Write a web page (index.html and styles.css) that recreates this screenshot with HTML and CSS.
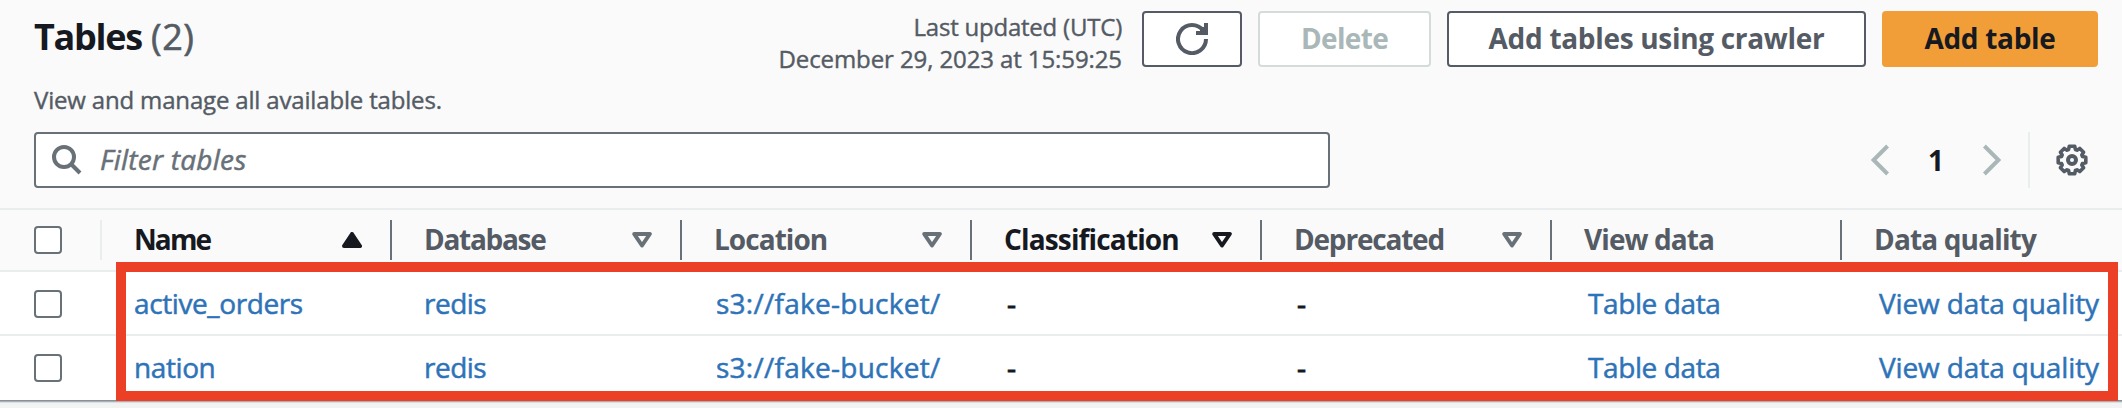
FILE: index.html
```html
<!DOCTYPE html>
<html lang="en">
<head>
<meta charset="utf-8">
<title>Tables</title>
<link rel="stylesheet" href="styles.css">
</head>
<body>
<main class="panel">
  <header class="header">
    <div class="heading">
      <h1 class="title"><span class="title-text">Tables</span> <span class="count">(2)</span></h1>
      <p class="description">View and manage all available tables.</p>
    </div>
    <div class="actions">
      <div class="updated"><div class="updated-label">Last updated (UTC)</div><div class="updated-time">December 29, 2023 at 15:59:25</div></div>
      <button class="btn btn-refresh" aria-label="Refresh">
        <svg width="32" height="32" viewBox="0 0 32 32" fill="none" stroke="currentColor" stroke-width="4"><path d="M30 16A14 14 0 1 1 27.3 7.8"/><path d="M30 0V10H20"/><path d="M24 8L28 4V8Z" fill="currentColor" stroke-width="1"/></svg>
      </button>
      <button class="btn btn-delete" disabled><span>Delete</span></button>
      <button class="btn btn-crawler"><span>Add tables using crawler</span></button>
      <button class="btn btn-primary"><span>Add table</span></button>
    </div>
  </header>
  <div class="tools">
    <div class="filter">
      <svg width="30" height="30" viewBox="0 0 30 30" fill="none" stroke="currentColor" stroke-width="4"><circle cx="12" cy="12" r="10"/><path d="M19 19L28 28"/></svg>
      <span class="placeholder">Filter tables</span>
    </div>
    <div class="pager">
      <svg class="chevron" width="18" height="32" viewBox="0 0 18 32" fill="none" stroke="currentColor" stroke-width="4"><path d="M16.6 2L2.6 16L16.6 30"/></svg>
      <span class="page">1</span>
      <svg class="chevron" width="18" height="32" viewBox="0 0 18 32" fill="none" stroke="currentColor" stroke-width="4"><path d="M1.4 2L15.4 16L1.4 30"/></svg>
      <span class="settings"><svg width="32" height="32" viewBox="0 0 32 32" fill="none" stroke="currentColor" stroke-width="4"><path stroke-width="3.6" stroke-linejoin="round" d="M13.3 2.2H18.7L19.4 5.5L21 6.2L23.8 4.4L27.6 8.2L25.8 11L26.5 12.6L29.8 13.3V18.7L26.5 19.4L25.8 21L27.6 23.8L23.8 27.6L21 25.8L19.4 26.5L18.7 29.8H13.3L12.6 26.5L11 25.8L8.2 27.6L4.4 23.8L6.2 21L5.5 19.4L2.2 18.7V13.3L5.5 12.6L6.2 11L4.4 8.2L8.2 4.4L11 6.2L12.6 5.5Z"/><circle cx="16" cy="16" r="4"/></svg></span>
    </div>
  </div>
  <div class="table">
    <div class="row head">
      <div class="select"><span class="checkbox"></span></div>
      <div class="th strong"><span class="t-name">Name</span><svg width="20" height="16" viewBox="0 0 20 16"><path d="M10 2L18 14H2Z" fill="currentColor" stroke="currentColor" stroke-width="4" stroke-linejoin="round"/></svg></div>
      <div class="th"><span class="t-database">Database</span><svg width="20" height="16" viewBox="0 0 20 16"><path d="M10 13.5L17.8 2H2.2Z" fill="none" stroke="currentColor" stroke-width="4" stroke-linejoin="round"/></svg></div>
      <div class="th"><span class="t-location">Location</span><svg width="20" height="16" viewBox="0 0 20 16"><path d="M10 13.5L17.8 2H2.2Z" fill="none" stroke="currentColor" stroke-width="4" stroke-linejoin="round"/></svg></div>
      <div class="th strong"><span class="t-class">Classification</span><svg width="20" height="16" viewBox="0 0 20 16"><path d="M10 13.5L17.8 2H2.2Z" fill="none" stroke="currentColor" stroke-width="4" stroke-linejoin="round"/></svg></div>
      <div class="th"><span class="t-deprecated">Deprecated</span><svg width="20" height="16" viewBox="0 0 20 16"><path d="M10 13.5L17.8 2H2.2Z" fill="none" stroke="currentColor" stroke-width="4" stroke-linejoin="round"/></svg></div>
      <div class="th"><span class="t-view">View data</span></div>
      <div class="th last"><span class="t-quality">Data quality</span></div>
    </div>
    <div class="row">
      <div class="select"><span class="checkbox"></span></div>
      <div class="td"><a class="c-name">active_orders</a></div>
      <div class="td"><a class="c-db">redis</a></div>
      <div class="td bucket"><a class="c-loc">s3://fake-bucket/</a></div>
      <div class="td dash">-</div>
      <div class="td dash">-</div>
      <div class="td inset"><a class="c-view">Table data</a></div>
      <div class="td quality"><a class="c-quality">View data quality</a></div>
    </div>
    <div class="row">
      <div class="select"><span class="checkbox"></span></div>
      <div class="td"><a class="c-name">nation</a></div>
      <div class="td"><a class="c-db">redis</a></div>
      <div class="td bucket"><a class="c-loc">s3://fake-bucket/</a></div>
      <div class="td dash">-</div>
      <div class="td dash">-</div>
      <div class="td inset"><a class="c-view">Table data</a></div>
      <div class="td quality"><a class="c-quality">View data quality</a></div>
    </div>
    <div class="highlight"></div>
  </div>
  <div class="edge"></div>
</main>
</body>
</html>
```
FILE: styles.css
```css
* { box-sizing: border-box; }
body {
  margin: 0;
  background: #f2f3f3;
  color: #16191f;
  font-family: "Open Sans", "Noto Sans", sans-serif;
  font-size: 28px;
  overflow: hidden;
}
svg { display: block; flex: none; }
.panel { width: 2122px; height: 403px; background: #fafafa; }
.edge { height: 3px; background: linear-gradient(#879196 0 1px, #aab0b5 1px 2px, #dcdfe0 2px); }
.header { display: flex; justify-content: space-between; height: 132px; padding: 11px 24px 0 34px; }
.title { margin: 0; font-size: 36px; line-height: 52px; font-weight: 700; white-space: nowrap; }
.title-text { letter-spacing: -1.3px; }
.count { font-weight: 500; color: #545b64; letter-spacing: 0.5px; -webkit-text-stroke: 0.6px; }
.description { margin: 20px 0 0; font-size: 24px; line-height: 34px; font-weight: 500; letter-spacing: -0.17px; color: #545b64; white-space: nowrap; -webkit-text-stroke: 0.4px; }
.actions { display: flex; gap: 16px; }
.updated { margin-right: 4px; font-size: 24px; line-height: 32px; font-weight: 500; color: #545b64; text-align: right; white-space: nowrap; -webkit-text-stroke: 0.4px; }
.updated-label { letter-spacing: -0.22px; }
.updated-time { letter-spacing: -0.1px; }
.btn {
  display: flex; align-items: center; justify-content: center;
  height: 56px; padding: 0; border: 2px solid #545b64; border-radius: 4px;
  background: #fff; color: #545b64; font: 700 28px/40px "Open Sans", sans-serif; white-space: nowrap;
}
.btn span { padding-bottom: 2px; }
.btn-refresh { width: 100px; }
.btn-delete { width: 173px; border-color: #d5dbdb; color: #aab7b8; letter-spacing: -0.65px; }
.btn-crawler { width: 419px; letter-spacing: -0.31px; }
.btn-primary { width: 216px; border-color: #f19e38; background: #f19e38; color: #16191f; letter-spacing: -0.3px; }
.tools { display: flex; justify-content: space-between; height: 76px; padding: 0 34px; }
.filter {
  display: flex; align-items: center; gap: 18px; width: 1296px; height: 56px; padding-left: 16px;
  border: 2px solid #687078; border-radius: 4px; background: #fff; color: #687078;
}
.placeholder { padding-bottom: 2px; font-style: italic; font-weight: 500; line-height: 40px; letter-spacing: 0.25px; -webkit-text-stroke: 0.5px; }
.pager { display: flex; align-items: center; height: 56px; }
.chevron { color: #aab7b8; }
.page { width: 94px; text-align: center; font-weight: 700; }
.settings { display: flex; align-items: center; height: 56px; margin-left: 27px; padding-left: 26px; border-left: 2px solid #eaeded; color: #545b64; }
.table { position: relative; }
.row {
  display: grid; grid-template-columns: 102px repeat(6, 290px) 280px; height: 64px; padding-top: 2px;
  border-bottom: 2px solid #eaeded; background: #fff; align-items: center;
}
.row:nth-child(3) { border-bottom-color: #fff; }
.head { padding-top: 0; border-top: 2px solid #eaeded; background: #fafafa; }
.select { display: flex; align-items: center; height: 40px; padding-left: 34px; }
.head .select { border-right: 2px solid #eaeded; }
.checkbox { width: 28px; height: 28px; border: 2px solid #687078; border-radius: 4px; background: #fff; }
.th {
  display: flex; align-items: center; justify-content: space-between; height: 40px;
  padding: 0 28px 0 32px; border-right: 2px solid #687078; color: #545b64; font-weight: 700; line-height: 38px; white-space: nowrap;
}
.th span { padding-bottom: 2px; }
.th svg { color: #687078; }
.strong, .strong svg { color: #16191f; }
.t-name { letter-spacing: -1.9px; }
.t-database { letter-spacing: -1.3px; }
.t-location { letter-spacing: -0.95px; }
.t-class { letter-spacing: -0.85px; }
.t-deprecated { letter-spacing: -1.2px; }
.t-view { letter-spacing: -0.9px; }
.t-quality { letter-spacing: -0.85px; }
.last { border-right: 0; }
.td { padding: 0 0 2px 32px; line-height: 40px; white-space: nowrap; font-weight: 500; -webkit-text-stroke: 0.5px; }
.td a { color: #2e73b8; }
.c-name { letter-spacing: -0.4px; }
.c-db { letter-spacing: -0.5px; }
.c-loc { letter-spacing: 0.26px; }
.c-view { letter-spacing: -0.4px; }
.c-quality { letter-spacing: -0.12px; }
.td.bucket { padding-left: 34px; }
.td.dash { padding-left: 35px; -webkit-text-stroke: 0.9px; }
.td.inset { padding-left: 36px; }
.td.quality { padding-left: 37px; }
.highlight { position: absolute; left: 116px; top: 54px; width: 2002px; height: 139px; border: 10px solid #eb4026; }
```
